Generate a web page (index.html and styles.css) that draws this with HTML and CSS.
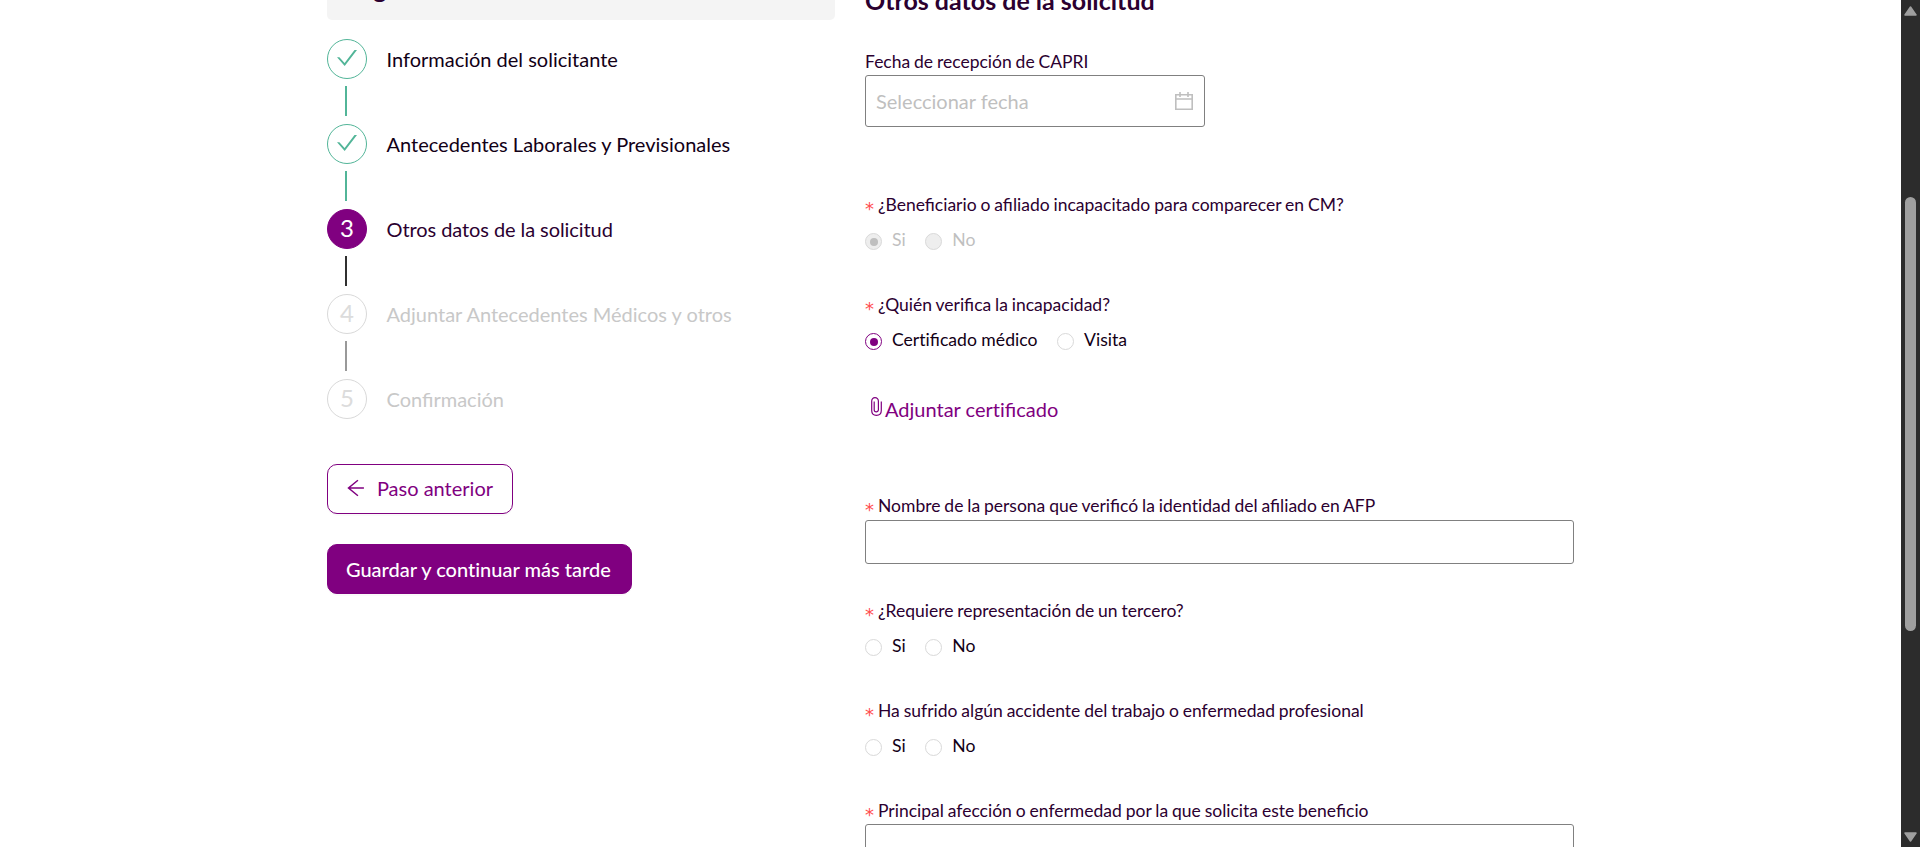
FILE: index.html
```html
<!DOCTYPE html>
<html lang="es">
<head>
<meta charset="utf-8">
<title>Otros datos de la solicitud</title>
<link rel="stylesheet" href="styles.css">
</head>
<body>
<div class="page">
  <aside class="sidebar">
    <div class="panel"><h2 class="panel-title">Ingreso</h2></div>
    <ol class="steps">
      <li class="step done">
        <div class="track"><span class="circle"><svg class="check" viewBox="0 0 20 16"><path d="M0 7.200h2.400L7.600 13 17.500 0H20L7.700 16z"/></svg></span><span class="line"></span></div>
        <span class="step-label">Información del solicitante</span>
      </li>
      <li class="step done">
        <div class="track"><span class="circle"><svg class="check" viewBox="0 0 20 16"><path d="M0 7.200h2.400L7.600 13 17.500 0H20L7.700 16z"/></svg></span><span class="line"></span></div>
        <span class="step-label">Antecedentes Laborales y Previsionales</span>
      </li>
      <li class="step active">
        <div class="track"><span class="circle">3</span><span class="line"></span></div>
        <span class="step-label">Otros datos de la solicitud</span>
      </li>
      <li class="step wait">
        <div class="track"><span class="circle">4</span><span class="line"></span></div>
        <span class="step-label">Adjuntar Antecedentes Médicos y otros</span>
      </li>
      <li class="step wait">
        <div class="track"><span class="circle">5</span></div>
        <span class="step-label">Confirmación</span>
      </li>
    </ol>
    <div class="actions">
      <button class="btn btn-outline"><svg class="arrow" viewBox="0 0 18 18"><path d="M17 9H1.500M11 1.200 1.500 9l9.500 7.800"/></svg>Paso anterior</button>
      <button class="btn btn-primary">Guardar y continuar más tarde</button>
    </div>
  </aside>

  <main class="form">
    <h1 class="title">Otros datos de la solicitud</h1>

    <div class="field field-date">
      <label class="label">Fecha de recepción de CAPRI</label>
      <div class="date-input">
        <span class="placeholder">Seleccionar fecha</span>
        <svg class="calendar" viewBox="0 0 18 18"><path d="M.8 2.800h16.400v14.400H.8zM.8 7h16.400M5 0v5M13 0v5"/></svg>
      </div>
    </div>

    <div class="field field-choice">
      <div class="label required">¿Beneficiario o afiliado incapacitado para comparecer en CM?</div>
      <div class="radios disabled">
        <span class="option"><i class="radio checked"></i>Si</span>
        <span class="option"><i class="radio"></i>No</span>
      </div>
    </div>

    <div class="field field-choice">
      <div class="label required">¿Quién verifica la incapacidad?</div>
      <div class="radios">
        <span class="option"><i class="radio checked"></i><span>Cer<span class="plain">t</span>ificado médico</span></span>
        <span class="option"><i class="radio"></i>Visita</span>
      </div>
    </div>

    <a class="attach"><svg class="clip" viewBox="0 0 11 19"><path d="M3.200 4.500v8.300a2.100 2.100 0 0 0 4.200 0V4.200C7.400 2 6 .7 4 .7S.7 2 .7 4.200v9.300c0 3 2 4.800 4.700 4.800s4.900-1.800 4.900-4.800V4.500"/></svg><span>Adjuntar cer<span class="plain">t</span>ificado</span></a>

    <div class="field field-text">
      <label class="label required"><span>Nombre de la persona que verificó la iden<span class="plain">t</span>idad del afiliado en AFP</span></label>
      <div class="text-input"></div>
    </div>

    <div class="field field-choice">
      <div class="label required">¿Requiere representación de un tercero?</div>
      <div class="radios">
        <span class="option"><i class="radio"></i>Si</span>
        <span class="option"><i class="radio"></i>No</span>
      </div>
    </div>

    <div class="field field-choice">
      <div class="label required">Ha sufrido algún accidente del trabajo o enfermedad profesional</div>
      <div class="radios">
        <span class="option"><i class="radio"></i>Si</span>
        <span class="option"><i class="radio"></i>No</span>
      </div>
    </div>

    <div class="field field-text">
      <label class="label required">Principal afección o enfermedad por la que solicita este beneficio</label>
      <div class="text-input"></div>
    </div>
  </main>

  <div class="scrollbar">
    <svg class="sb-arrow" viewBox="0 0 13 10"><path d="M6.500 1 12 9H1z"/></svg>
    <span class="thumb"></span>
    <svg class="sb-arrow" viewBox="0 0 13 10"><path d="M6.500 9 12 1H1z"/></svg>
  </div>
</div>
</body>
</html>
```
FILE: styles.css
```css
* { box-sizing: border-box; }
body { margin: 0; overflow: hidden; background: #fff; font-family: Lato, "Open Sans", sans-serif; color: #2b0030; }
.page { display: flex; height: 847px; overflow: hidden; }
.plain { font-variant-ligatures: none; }

.sidebar { width: 508px; margin-left: 327px; flex: none; }
.panel { height: 20px; background: #f4f4f4; border-radius: 0 0 5px 5px; padding-left: 25px; }
.panel-title { margin: 0; transform: translateY(-26px); font-size: 25px; line-height: 29px; font-weight: 700; }
.steps { list-style: none; margin: 19px 0 0; padding: 0; }
.step { display: flex; height: 85px; gap: 19.500px; font-size: 20px; line-height: 40px; }
.step:last-child { height: 40px; }
.track { width: 40px; display: flex; flex-direction: column; }
.circle { width: 40px; height: 40px; flex: none; border: 1px solid #d9d9d9; border-radius: 50%; display: flex; align-items: center; justify-content: center; font-size: 24px; line-height: 1; padding-bottom: 2px; color: #dcdcdc; }
.line { width: 2px; height: 30px; margin: 7px 0 0 18px; background: #999; }
.step-label { white-space: nowrap; }
.active .step-label { letter-spacing: -0.080px; }
.done .circle { border-color: #52b598; }
.done .line { background: #52b598; }
.done .step-label { color: #120016; }
.check { width: 20px; height: 16px; fill: #52b598; }
.active .circle { background: #800080; border-color: #800080; color: #fff; }
.active .line { background: #303030; }
.wait .step-label { color: #c8c8c8; }

.actions { display: flex; flex-direction: column; align-items: flex-start; gap: 30px; margin-top: 45px; }
.btn { height: 50px; border: 1px solid #800080; border-radius: 10px; padding: 0 19px 0 18px; font: 400 20px Lato, sans-serif; font-variant-ligatures: none; box-shadow: 0 2px 0 rgba(0,0,0,.02); display: flex; align-items: center; white-space: nowrap; }
.btn-outline { width: 186px; background: #fff; color: #800080; padding-bottom: 2px; }
.btn-primary { width: 305px; background: #800080; color: #fff; font-weight: 500; }
.arrow { width: 18px; height: 18px; margin: 0 12px 0 1px; fill: none; stroke: #800080; stroke-width: 1.500; }

.form { width: 709px; margin-left: 30px; flex: none; }
.title { margin: -14px 0 0; height: 61px; font-size: 25px; line-height: 29px; font-weight: 700; white-space: nowrap; }
.label { display: flex; height: 28px; font-size: 17.500px; line-height: 30px; word-spacing: -0.600px; white-space: nowrap; }
.required::before { content: "*"; width: 9px; color: #ff4d4f; margin-right: 4px; padding-top: 4px; font-family: "DejaVu Sans", sans-serif; font-size: 18px; }
.field-date { height: 143px; }
.date-input { width: 340px; height: 52px; border: 1px solid #808080; border-radius: 3px; display: flex; align-items: center; justify-content: space-between; padding: 0 11px 0 10px; font-size: 20px; color: #bfbfbf; }
.calendar { width: 18px; height: 18px; fill: none; stroke: #bfbfbf; stroke-width: 1.600; }
.field-choice { height: 100px; }
.radios { display: flex; gap: 19.600px; height: 28px; margin-top: 7px; font-size: 17.600px; line-height: 30px; color: #120016; }
.option { display: flex; }
.radio { width: 17px; height: 17px; margin: 8px 10px 0 0; border: 1px solid #d9d9d9; border-radius: 50%; display: flex; align-items: center; justify-content: center; }
.radio.checked { border-color: #800080; }
.radio.checked::after { content: ""; width: 8px; height: 8px; border-radius: 50%; background: #800080; }
.disabled { color: #bfbfbf; }
.disabled .radio { background: #eee; border-color: #d9d9d9; }
.disabled .radio.checked::after { background: #bfbfbf; }
.attach { display: flex; height: 101px; padding: 3px 0 0 6px; font-size: 20px; line-height: 32px; color: #800080; }
.clip { width: 11px; height: 19px; margin: 4px 3px 0 0; fill: none; stroke: #800080; stroke-width: 1.200; }
.field-text { height: 105px; }
.text-input { height: 44px; margin-top: 1px; border: 1px solid #808080; border-radius: 3px; }
.field-text:last-child .text-input { margin-top: 0; }

.scrollbar { width: 19px; height: 847px; margin-left: auto; flex: none; background: #2c2c2c; display: flex; flex-direction: column; align-items: center; padding: 6px 0 5px; }
.sb-arrow { width: 13px; height: 10px; fill: #9f9f9f; stroke: #9f9f9f; stroke-width: 1.500; stroke-linejoin: round; }
.thumb { width: 11px; height: 434px; margin: 181px 0 201px; border-radius: 6px; background: #9f9f9f; }
```
